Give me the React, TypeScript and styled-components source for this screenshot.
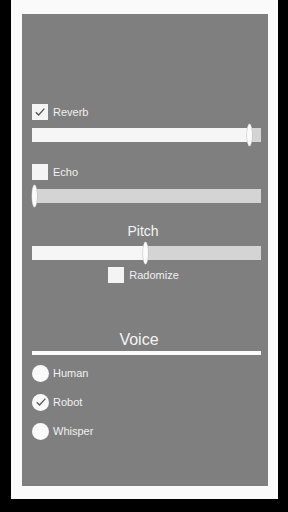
import React from 'react';
import styled, { createGlobalStyle } from 'styled-components';

const GlobalStyle = createGlobalStyle`
  html, body {
    margin: 0;
    padding: 0;
    background: #000;
    font-family: "Liberation Sans", Arial, sans-serif;
  }
`;

const Screen = styled.div`
  width: 288px;
  height: 512px;
  background: #000;
  padding-left: 11px;
  box-sizing: border-box;
`;

const Frame = styled.div`
  width: 267px;
  height: 499px;
  background: #fafafa;
  padding: 14px 10px 13px 11px;
  box-sizing: border-box;
`;

const Panel = styled.div`
  height: 100%;
  background: #7f7f7f;
  padding: 90px 7px 0 10px;
  box-sizing: border-box;
  display: flex;
  flex-direction: column;
  color: #f2f2f2;
`;

const Row = styled.div<{ $top: number; $center?: boolean }>`
  display: flex;
  align-items: center;
  gap: 5px;
  height: 16px;
  margin-top: ${(p) => p.$top}px;
  justify-content: ${(p) => (p.$center ? 'center' : 'flex-start')};
  padding-right: ${(p) => (p.$center ? '6px' : '0')};
`;

const Box = styled.div`
  width: 16px;
  height: 16px;
  background: #f4f4f4;
  display: flex;
  align-items: center;
  justify-content: center;
  flex-shrink: 0;
`;

const Label = styled.span`
  font-size: 11px;
  color: #f0f0f0;
`;

const Track = styled.div<{ $top: number }>`
  position: relative;
  height: 14px;
  margin-top: ${(p) => p.$top}px;
  background: #d4d4d4;
`;

const Fill = styled.div`
  height: 100%;
  background: #f6f6f6;
`;

const Handle = styled.div`
  position: absolute;
  top: -4px;
  width: 5px;
  height: 22px;
  margin-left: -2px;
  border-radius: 50%;
  background: #fbfbfb;
  box-shadow: 0 0 0 0.5px #bdbdbd;
`;

const Title = styled.div<{ $top: number; $size: number; $shift: number }>`
  margin-top: ${(p) => p.$top}px;
  padding-right: ${(p) => p.$shift}px;
  font-size: ${(p) => p.$size}px;
  line-height: ${(p) => p.$size + 3}px;
  text-align: center;
  color: #f4f4f4;
`;

const Rule = styled.div`
  height: 4px;
  margin-top: 2px;
  background: #fbfbfb;
`;

const RadioList = styled.div`
  display: flex;
  flex-direction: column;
  gap: 11px;
  margin-top: 9px;
`;

const RadioRow = styled.div`
  display: flex;
  align-items: center;
  gap: 4px;
  height: 18px;
`;

const Circle = styled.div`
  width: 17px;
  height: 17px;
  border-radius: 50%;
  background: #fafafa;
  display: flex;
  align-items: center;
  justify-content: center;
  flex-shrink: 0;
`;

const Check = () => (
  <svg width="12" height="12" viewBox="0 0 12 12">
    <path d="M1.8 6.2 L4.6 9 L10.4 2.6" fill="none" stroke="#555" strokeWidth="1.3" />
  </svg>
);

const Toggle: React.FC<{ label: string; checked?: boolean; top: number; center?: boolean }> = ({
  label,
  checked,
  top,
  center,
}) => (
  <Row $top={top} $center={center}>
    <Box>{checked && <Check />}</Box>
    <Label>{label}</Label>
  </Row>
);

const Slider: React.FC<{ value: number; top: number }> = ({ value, top }) => (
  <Track $top={top}>
    <Fill style={{ width: `${value * 100}%` }} />
    <Handle style={{ left: `${value * 100}%` }} />
  </Track>
);

const voices = [
  { name: 'Human', on: false },
  { name: 'Robot', on: true },
  { name: 'Whisper', on: false },
];

export default function App() {
  return (
    <Screen>
      <GlobalStyle />
      <Frame>
        <Panel>
          <Toggle label="Reverb" checked top={0} />
          <Slider value={0.947} top={8} />
          <Toggle label="Echo" top={22} />
          <Slider value={0.01} top={9} />
          <Title $top={20} $size={14} $shift={7}>Pitch</Title>
          <Slider value={0.495} top={6} />
          <Toggle label="Radomize" top={7} center />
          <Title $top={47} $size={16} $shift={15}>Voice</Title>
          <Rule />
          <RadioList>
            {voices.map((v) => (
              <RadioRow key={v.name}>
                <Circle>{v.on && <Check />}</Circle>
                <Label>{v.name}</Label>
              </RadioRow>
            ))}
          </RadioList>
        </Panel>
      </Frame>
    </Screen>
  );
}
